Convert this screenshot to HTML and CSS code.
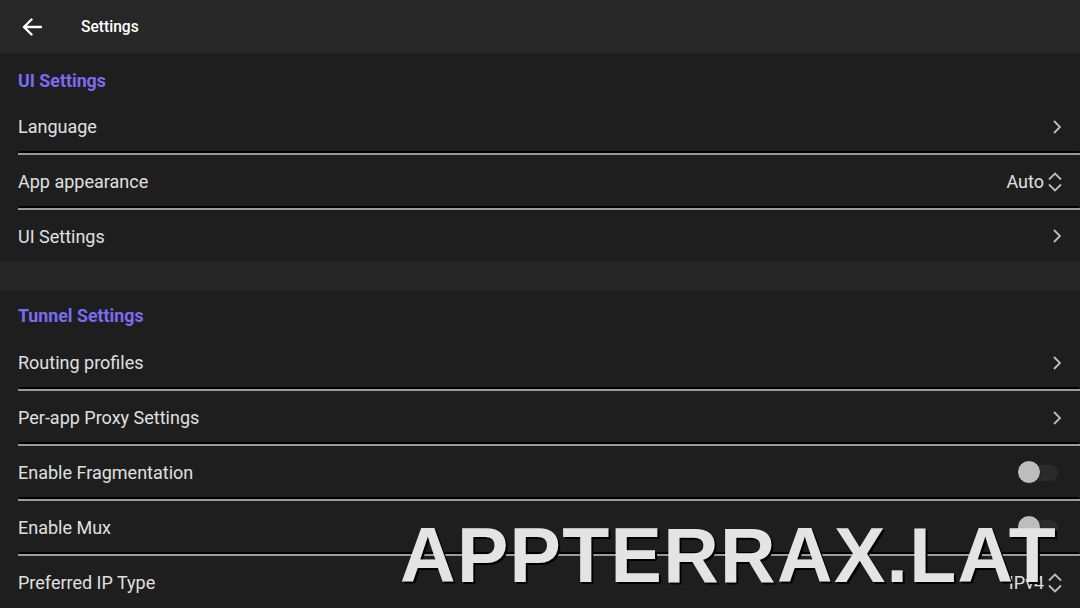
FILE: index.html
```html
<!DOCTYPE html>
<html lang="en">
<head>
    <meta charset="UTF-8">
    <meta name="viewport" content="width=device-width, initial-scale=1.0">
    <link rel="stylesheet" href="styles.css">
    <title>Settings</title>
</head>
<body>
    <header class="topbar">
        <svg class="back" width="20" height="18" viewBox="0 0 20 18">
            <path d="M19 9H2M9.5 1.5L2 9l7.5 7.5" fill="none" stroke="#fff" stroke-width="2.4" stroke-linecap="round" stroke-linejoin="round"/>
        </svg>
        <h1 class="title">Settings</h1>
    </header>

    <section class="group">
        <h2 class="group_title">UI Settings</h2>
        <div class="row">
            <span class="label">Language</span>
            <svg class="chev" width="10" height="16" viewBox="0 0 10 16"><path d="M2 2l6 6-6 6" fill="none" stroke="#bdbdbd" stroke-width="1.8"/></svg>
        </div>
        <div class="row">
            <span class="label">App appearance</span>
            <span class="value">Auto</span>
            <svg class="updown" width="16" height="22" viewBox="0 0 16 22"><path d="M2 8.5l6-6 6 6M2 13.5l6 6 6-6" fill="none" stroke="#bdbdbd" stroke-width="1.8"/></svg>
        </div>
        <div class="row last">
            <span class="label">UI Settings</span>
            <svg class="chev" width="10" height="16" viewBox="0 0 10 16"><path d="M2 2l6 6-6 6" fill="none" stroke="#bdbdbd" stroke-width="1.8"/></svg>
        </div>
    </section>

    <div class="spacer"></div>

    <section class="group">
        <h2 class="group_title tunnel">Tunnel Settings</h2>
        <div class="row">
            <span class="label">Routing profiles</span>
            <svg class="chev" width="10" height="16" viewBox="0 0 10 16"><path d="M2 2l6 6-6 6" fill="none" stroke="#bdbdbd" stroke-width="1.8"/></svg>
        </div>
        <div class="row">
            <span class="label">Per-app Proxy Settings</span>
            <svg class="chev" width="10" height="16" viewBox="0 0 10 16"><path d="M2 2l6 6-6 6" fill="none" stroke="#bdbdbd" stroke-width="1.8"/></svg>
        </div>
        <div class="row">
            <span class="label">Enable Fragmentation</span>
            <span class="switch"><span class="thumb"></span></span>
        </div>
        <div class="row">
            <span class="label">Enable Mux</span>
            <span class="switch"><span class="thumb"></span></span>
        </div>
        <div class="row">
            <span class="label">Preferred IP Type</span>
            <span class="value">IPv4</span>
            <svg class="updown" width="16" height="22" viewBox="0 0 16 22"><path d="M2 8.5l6-6 6 6M2 13.5l6 6 6-6" fill="none" stroke="#bdbdbd" stroke-width="1.8"/></svg>
        </div>
    </section>

    <div class="stamp">APPTERRAX.LAT</div>
</body>
</html>
```

FILE: styles.css
```css
*{
    margin: 0;
    padding: 0;
    box-sizing: border-box;
}
body{
    width: 1080px;
    height: 608px;
    overflow: hidden;
    background-color: #1e1e1e;
    font-family: Roboto, "Liberation Sans", sans-serif;
    color: #e2e2e2;
    position: relative;
}
.topbar{
    height: 53px;
    background-color: #272727;
    display: flex;
    align-items: center;
    padding-left: 22px;
}
.back{
    display: block;
}
.title{
    margin-left: 39px;
    font-size: 15.6px;
    font-weight: 500;
    color: #fff;
}
.group{
    padding-left: 18px;
}
.group_title{
    height: 47px;
    padding-top: 17px;
    font-size: 17.8px;
    font-weight: 700;
    color: #7a6cf0;
}
.group_title.tunnel{
    height: 46px;
    padding-top: 15px;
}
.row{
    height: 55px;
    display: flex;
    align-items: center;
    padding-right: 17px;
    border-top: 2px solid #9a9a9a;
    box-shadow: 0 -3px 0 -1px #000;
}
.group_title + .row{
    border-top: 0;
    box-shadow: none;
    height: 53px;
}
.row.last{
    height: 54px;
}
.label{
    flex: 1;
    font-size: 18px;
    color: #e0e0e0;
}
.value{
    font-size: 18px;
    color: #e0e0e0;
    margin-right: 3px;
}
.chev{
    display: block;
    margin-right: 1px;
}
.updown{
    display: block;
}
.spacer{
    height: 28px;
    background-color: #262626;
}
.switch{
    width: 40px;
    height: 16px;
    margin-right: 5px;
    border-radius: 8px;
    background-color: #2b2b2b;
    position: relative;
}
.thumb{
    position: absolute;
    left: -1px;
    top: -5px;
    width: 24px;
    height: 24px;
    border-radius: 50%;
    background-color: #bdbdbd;
    border: 1px solid #111;
}
/* watermark laid over the list */
.stamp{
    position: absolute;
    left: 400px;
    top: 517px;
    font-family: "Liberation Sans", Arial, sans-serif;
    font-weight: 700;
    font-size: 77px;
    line-height: 1;
    letter-spacing: 1.3px;
    color: #e4e4e4;
    text-shadow: 2px 2px 0 #000;
    white-space: nowrap;
}
```
